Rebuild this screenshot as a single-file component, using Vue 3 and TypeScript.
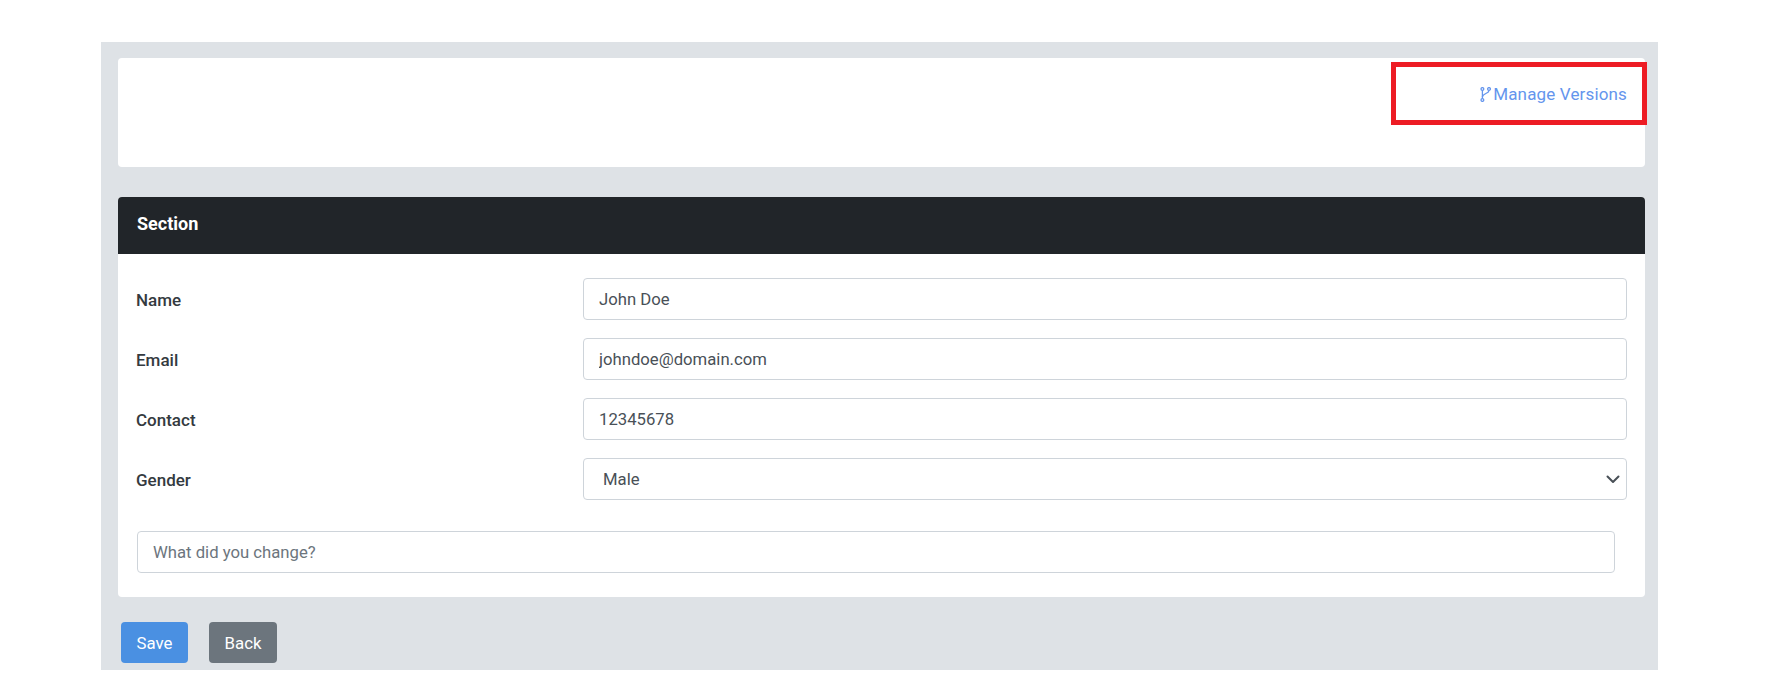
<script setup lang="ts">
import { ref } from 'vue'

interface Field {
  label: string
  value: string
}

const fields = ref<Field[]>([
  { label: 'Name', value: 'John Doe' },
  { label: 'Email', value: 'johndoe@domain.com' },
  { label: 'Contact', value: '12345678' },
])
const gender = ref('Male')
</script>

<template>
  <div class="page">
    <main class="panel">
      <section class="top-card">
        <a class="manage" href="#">
          <svg class="fork" viewBox="0 0 11 15" width="11" height="15" aria-hidden="true">
            <g fill="none" stroke="currentColor" stroke-width="1.3">
              <circle cx="2.4" cy="2" r="1.4" />
              <circle cx="9" cy="2" r="1.4" />
              <circle cx="2.4" cy="13" r="1.4" />
              <path d="M2.4 3.4V11.6" />
              <path d="M9 3.4C9 6.6 2.4 6.4 2.4 10" />
            </g>
          </svg>
          <span>Manage Versions</span>
        </a>
        <div class="highlight"></div>
      </section>

      <section class="form-card">
        <header class="form-head">Section</header>
        <div class="form-body">
          <div v-for="f in fields" :key="f.label" class="row">
            <label class="label">{{ f.label }}</label>
            <input class="control" type="text" :value="f.value" />
          </div>
          <div class="row">
            <label class="label">Gender</label>
            <div class="select-wrap">
              <select v-model="gender" class="control select">
                <option>Male</option>
                <option>Female</option>
              </select>
              <svg class="chevron" viewBox="0 0 16 16" width="16" height="16" aria-hidden="true">
                <path d="M2.5 5.5l5.5 5.5 5.5-5.5" fill="none" stroke="#495057" stroke-width="2" stroke-linecap="round" stroke-linejoin="round" />
              </svg>
            </div>
          </div>
          <div class="change">
            <input class="control" type="text" placeholder="What did you change?" />
          </div>
        </div>
      </section>

      <div class="actions">
        <button class="btn save" type="button">Save</button>
        <button class="btn back" type="button">Back</button>
      </div>
    </main>
  </div>
</template>

<style>
html, body { margin: 0; background: #fff; }
</style>

<style scoped>
.page {
  padding: 42px 109px 24px 101px;
  font-family: Roboto, "Liberation Sans", sans-serif;
  font-size: 16px;
  color: #212529;
}
.panel {
  background: #dee2e6;
  padding: 16px 13px 7px 17px;
  height: 628px;
  box-sizing: border-box;
}
.top-card {
  position: relative;
  background: #fff;
  border-radius: 4px;
  height: 109px;
  box-sizing: border-box;
  padding: 24px 18px 0 0;
  display: flex;
  justify-content: flex-end;
  align-items: flex-start;
}
.manage {
  display: flex;
  align-items: center;
  gap: 2px;
  color: #6495ed;
  text-decoration: none;
  font-size: 17px;
  letter-spacing: 0.15px;
  line-height: 24px;
}
.fork { display: block; }
.highlight {
  position: absolute;
  left: 1273px;
  top: 4px;
  width: 256px;
  height: 63px;
  box-sizing: border-box;
  border: 5px solid #ed1c24;
  pointer-events: none;
}
.form-card {
  margin-top: 30px;
  background: #fff;
  border-radius: 4px;
  overflow: hidden;
}
.form-head {
  height: 57px;
  line-height: 54px;
  padding-left: 19px;
  background: #212529;
  color: #fff;
  font-size: 18px;
  font-weight: 700;
}
.form-body {
  padding: 24px 18px 24px 18px;
  display: flex;
  flex-direction: column;
  gap: 18px;
}
.row {
  display: flex;
  align-items: center;
}
.label {
  flex: 0 0 447px;
  padding-top: 2px;
  font-size: 17px;
  font-weight: 500;
  line-height: 24px;
  color: #343a40;
}
.control {
  flex: 1;
  width: 100%;
  height: 42px;
  box-sizing: border-box;
  border: 1px solid #ced4da;
  border-radius: 4px;
  background: #fff;
  padding: 0 15px;
  font: inherit;
  font-size: 16.7px;
  color: #495057;
  outline: none;
  display: block;
}
.control::placeholder { color: #6c757d; opacity: 1; }
.select-wrap {
  position: relative;
  flex: 1;
}
.select {
  appearance: none;
  -webkit-appearance: none;
  padding-left: 19px;
}
.chevron {
  position: absolute;
  right: 6px;
  top: 13px;
  pointer-events: none;
}
.change {
  margin: 13px 12px 0 1px;
}
.actions {
  display: flex;
  gap: 21px;
  margin: 25px 0 0 3px;
}
.btn {
  height: 41px;
  border: 0;
  border-radius: 4px;
  font: inherit;
  font-size: 16.8px;
  color: #fff;
  padding: 0;
}
.save { width: 67px; background: #4a90e2; }
.back { width: 68px; background: #6c757d; }
</style>
